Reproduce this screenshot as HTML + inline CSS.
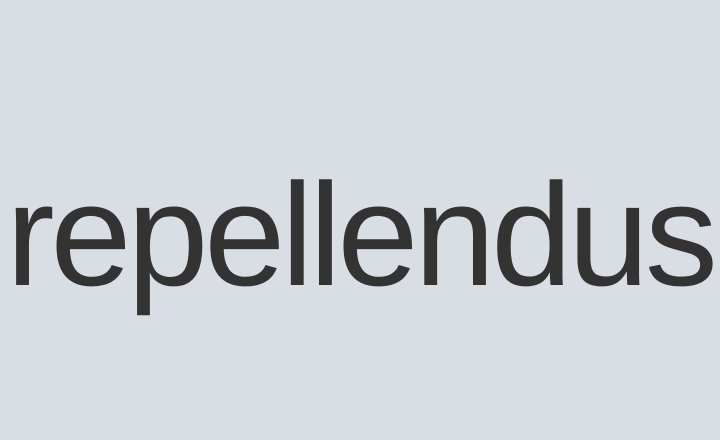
<!DOCTYPE html>
<html><head><style>
html,body{margin:0;padding:0;width:720px;height:440px;background:#d9dde4;overflow:hidden}
.t{position:absolute;left:6px;top:162px;font-family:"Liberation Sans",sans-serif;font-size:146px;line-height:1;color:#333;letter-spacing:-4.3px;white-space:nowrap}
</style></head><body><div class="t">repellendus</div></body></html>
